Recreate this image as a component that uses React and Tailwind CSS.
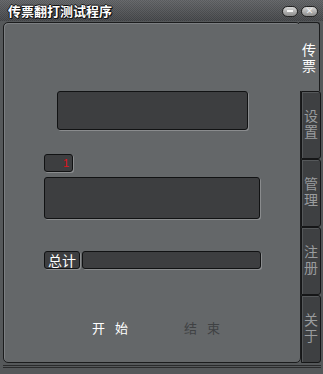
import React from 'react'

const cjk = { fontFamily: '"Noto Sans CJK SC", "Noto Sans", sans-serif' }

function Box({ className = '', children }) {
  return (
    <div
      className={`rounded-[3px] border border-[#111213] bg-[#3d3e40] shadow-[1px_1px_0_#8a8c8e] ${className}`}
    >
      {children}
    </div>
  )
}

function Vertical({ text }) {
  return (
    <span className="[writing-mode:vertical-rl] text-[14px] leading-[16px] tracking-[2px]">{text}</span>
  )
}

const tabs = ['设置', '管理', '注册', '关于']

export default function App() {
  return (
    <div className="w-[323px] h-[374px] bg-[#55585a] flex flex-col overflow-hidden" style={cjk}>
      {/* title bar */}
      <div
        className="h-[21px] flex items-center justify-between pl-[8px] pr-[5px] bg-[#4a4c4e]"
        style={{
          backgroundImage:
            'linear-gradient(to bottom, rgba(255,255,255,0.12), rgba(0,0,0,0.08)), repeating-conic-gradient(#55575a 0 25%, #45474a 0 50%)',
          backgroundSize: '100% 100%, 2px 2px',
        }}
      >
        <span
          className="text-white font-bold text-[13px] leading-none"
          style={{ textShadow: '1px 0 #111, -1px 0 #111, 0 1px #111, 0 -1px #111, 1px 1px #111' }}
        >
          传票翻打测试程序
        </span>
        <div className="flex gap-[3px] pt-[1px]">
          <div className="w-[16px] h-[11px] rounded-full border border-[#222] bg-gradient-to-b from-[#d8d8d8] to-[#8c8c8c] flex items-center justify-center">
            <div className="w-[6px] h-[2px] bg-[#f4f4f4]" />
          </div>
          <div className="w-[17px] h-[11px] rounded-full border border-[#222] bg-gradient-to-b from-[#d8d8d8] to-[#8c8c8c] flex items-center justify-center text-[8px] leading-none text-[#f4f4f4] font-bold">
            ×
          </div>
        </div>
      </div>

      {/* body */}
      <div className="flex pl-[3px] pt-[1px] h-[342px]">
        <div className="w-[298px] h-[341px] rounded-[5px] border border-[#1b1c1d] bg-[#646769] shadow-[inset_1px_1px_0_#7c7f82] flex flex-col">
          <Box className="ml-[53px] mt-[68px] w-[191px] h-[39px]" />
          <Box className="ml-[40px] mt-[24px] w-[29px] h-[18px] flex items-center justify-end pr-[3px]">
            <span className="text-[#e0141c] text-[11px] leading-none" style={{ fontFamily: '"Liberation Sans", sans-serif' }}>1</span>
          </Box>
          <Box className="ml-[40px] mt-[5px] w-[216px] h-[42px]" />
          <div className="ml-[40px] mt-[32px] flex gap-[2px]">
            <Box className="w-[36px] h-[18px] flex items-center justify-center">
              <span className="text-white text-[14px] leading-none">总计</span>
            </Box>
            <Box className="w-[179px] h-[18px]" />
          </div>
          <div className="mt-[52px] flex text-[13px] leading-none">
            <span className="ml-[88px] text-white tracking-[10px]">开始</span>
            <span className="ml-[46px] text-[#3f4143] tracking-[10px]">结束</span>
          </div>
        </div>

        {/* tabs */}
        <div className="flex flex-col w-[20px]">
          <div className="h-[69px] bg-[#646769] -ml-[2px] w-[21px] border-t border-r border-[#1b1c1d] rounded-tr-[3px] flex flex-col items-center justify-center text-white pt-[4px]">
            <Vertical text="传票" />
          </div>
          {tabs.map((t) => (
            <div
              key={t}
              className="h-[68px] bg-[#3e4042] border border-[#151617] rounded-r-[3px] shadow-[inset_1px_1px_0_#55585a] flex flex-col items-center justify-center text-[#9a9c9e]"
            >
              <Vertical text={t} />
            </div>
          ))}
        </div>
      </div>
      <div className="ml-[3px] mr-[2px] mt-[2px] h-[3px] border-t border-b border-[#2a2b2c]" />
    </div>
  )
}
